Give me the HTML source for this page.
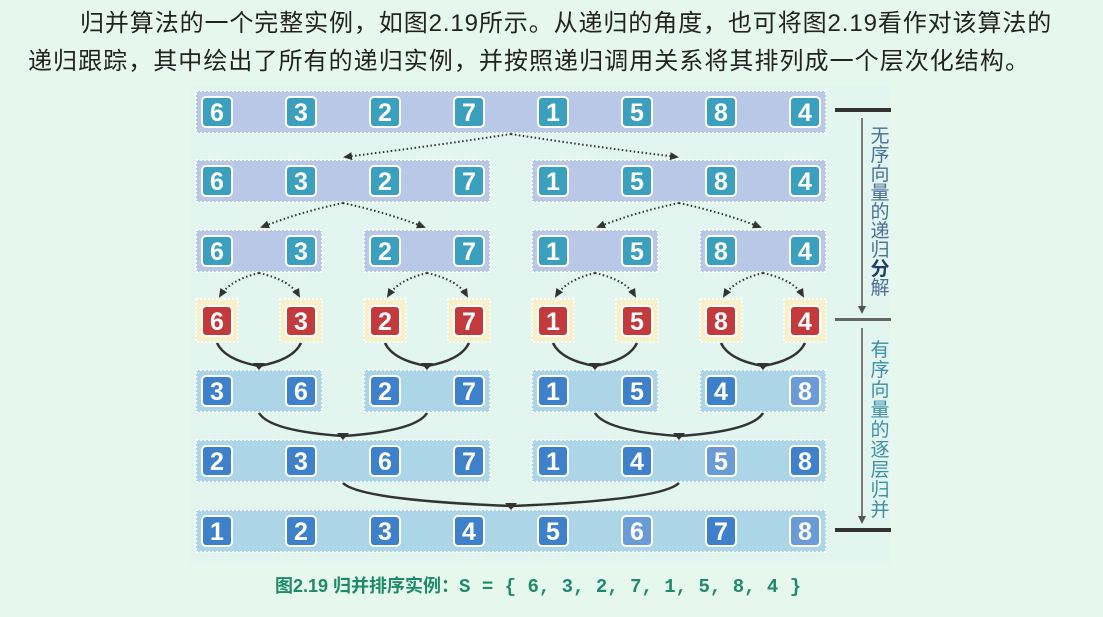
<!DOCTYPE html>
<html><head><meta charset="utf-8"><style>
html,body{margin:0;padding:0;}
body{width:1103px;height:617px;background:#e6f7ee;position:relative;overflow:hidden;font-family:"Liberation Sans","Noto Sans CJK SC",sans-serif;}
.l{position:absolute;white-space:nowrap;font-size:24px;color:#222;line-height:30px;}
</style></head><body>
<div class="l" style="left:80px;top:9px;letter-spacing:0.9px;">归并算法的一个完整实例，如图2.19所示。从递归的角度，也可将图2.19看作对该算法的</div>
<div class="l" style="left:28px;top:47px;letter-spacing:1.05px;">递归跟踪，其中绘出了所有的递归实例，并按照递归调用关系将其排列成一个层次化结构。</div>
<svg width="1103" height="617" style="position:absolute;left:0;top:0" xmlns="http://www.w3.org/2000/svg">
<defs>
<marker id="ah" markerUnits="userSpaceOnUse" markerWidth="9" markerHeight="8" refX="7" refY="4" orient="auto"><path d="M0,0 L9,4 L0,8 z" fill="#333"/></marker>
</defs>
<rect x="190" y="86" width="700" height="478" fill="#e2f5ef"/>
<g stroke="#fff" stroke-width="2" stroke-dasharray="2 2">
<rect x="196" y="91" width="630" height="42" fill="#b9c8e6"/>
<rect x="196" y="160" width="294" height="42" fill="#b9c8e6"/>
<rect x="532" y="160" width="294" height="42" fill="#b9c8e6"/>
<rect x="196" y="230" width="126" height="42" fill="#b9c8e6"/>
<rect x="364" y="230" width="126" height="42" fill="#b9c8e6"/>
<rect x="532" y="230" width="126" height="42" fill="#b9c8e6"/>
<rect x="700" y="230" width="126" height="42" fill="#b9c8e6"/>
<rect x="196" y="299" width="42" height="43" fill="#f7f0c8"/>
<rect x="280" y="299" width="42" height="43" fill="#f7f0c8"/>
<rect x="364" y="299" width="42" height="43" fill="#f7f0c8"/>
<rect x="448" y="299" width="42" height="43" fill="#f7f0c8"/>
<rect x="532" y="299" width="42" height="43" fill="#f7f0c8"/>
<rect x="616" y="299" width="42" height="43" fill="#f7f0c8"/>
<rect x="700" y="299" width="42" height="43" fill="#f7f0c8"/>
<rect x="784" y="299" width="42" height="43" fill="#f7f0c8"/>
<rect x="196" y="370" width="126" height="42" fill="#acd5e8"/>
<rect x="364" y="370" width="126" height="42" fill="#acd5e8"/>
<rect x="532" y="370" width="126" height="42" fill="#acd5e8"/>
<rect x="700" y="370" width="126" height="42" fill="#acd5e8"/>
<rect x="196" y="440" width="294" height="42" fill="#acd5e8"/>
<rect x="532" y="440" width="294" height="42" fill="#acd5e8"/>
<rect x="196" y="510" width="630" height="42" fill="#acd5e8"/>
</g>
<g fill="none" stroke="#333" stroke-width="2" stroke-dasharray="1.5 2.5" marker-end="url(#ah)">
<path d="M511,134 Q440,145 345,157"/><path d="M511,134 Q580,145 677,157"/>
<path d="M343,203 Q300,212 262,227"/><path d="M343,203 Q385,212 424,227"/>
<path d="M679,203 Q636,212 598,227"/><path d="M679,203 Q721,212 760,227"/>
<path d="M259,273 Q230,280 220,296"/><path d="M259,273 Q290,280 299,296"/>
<path d="M427,273 Q398,280 388,296"/><path d="M427,273 Q458,280 467,296"/>
<path d="M595,273 Q566,280 556,296"/><path d="M595,273 Q626,280 635,296"/>
<path d="M763,273 Q734,280 724,296"/><path d="M763,273 Q794,280 803,296"/>
</g>
<g fill="none" stroke="#333" stroke-width="2.5">
<path d="M217,343 Q225,360 259,366 Q293,360 301,343"/>
<path d="M385,343 Q393,360 427,366 Q461,360 469,343"/>
<path d="M553,343 Q561,360 595,366 Q629,360 637,343"/>
<path d="M721,343 Q729,360 763,366 Q797,360 805,343"/>
<path d="M259,413 Q270,431 343,436 Q416,431 427,413"/>
<path d="M595,413 Q606,431 679,436 Q752,431 763,413"/>
<path d="M343,483 Q360,500 511,506 Q662,500 679,483"/>
</g>
<g fill="#333">
<path d="M253,363 L265,363 L259,370 z"/><path d="M421,363 L433,363 L427,370 z"/>
<path d="M589,363 L601,363 L595,370 z"/><path d="M757,363 L769,363 L763,370 z"/>
<path d="M337,433 L349,433 L343,440 z"/><path d="M673,433 L685,433 L679,440 z"/>
<path d="M505,503 L517,503 L511,510 z"/>
</g>
<g font-family="Liberation Sans, sans-serif" font-weight="bold" font-size="25" fill="#fff" text-anchor="middle" stroke="#fff" stroke-width="2">
<g>
<rect x="202" y="97" width="30" height="30" rx="4" fill="#3aa0bd"/><text x="217" y="121" stroke="none">6</text>
<rect x="286" y="97" width="30" height="30" rx="4" fill="#3aa0bd"/><text x="301" y="121" stroke="none">3</text>
<rect x="370" y="97" width="30" height="30" rx="4" fill="#3aa0bd"/><text x="385" y="121" stroke="none">2</text>
<rect x="454" y="97" width="30" height="30" rx="4" fill="#3aa0bd"/><text x="469" y="121" stroke="none">7</text>
<rect x="538" y="97" width="30" height="30" rx="4" fill="#3aa0bd"/><text x="553" y="121" stroke="none">1</text>
<rect x="622" y="97" width="30" height="30" rx="4" fill="#3aa0bd"/><text x="637" y="121" stroke="none">5</text>
<rect x="706" y="97" width="30" height="30" rx="4" fill="#3aa0bd"/><text x="721" y="121" stroke="none">8</text>
<rect x="790" y="97" width="30" height="30" rx="4" fill="#3aa0bd"/><text x="805" y="121" stroke="none">4</text>
</g>
<g>
<rect x="202" y="166" width="30" height="30" rx="4" fill="#3aa0bd"/><text x="217" y="190" stroke="none">6</text>
<rect x="286" y="166" width="30" height="30" rx="4" fill="#3aa0bd"/><text x="301" y="190" stroke="none">3</text>
<rect x="370" y="166" width="30" height="30" rx="4" fill="#3aa0bd"/><text x="385" y="190" stroke="none">2</text>
<rect x="454" y="166" width="30" height="30" rx="4" fill="#3aa0bd"/><text x="469" y="190" stroke="none">7</text>
<rect x="538" y="166" width="30" height="30" rx="4" fill="#3aa0bd"/><text x="553" y="190" stroke="none">1</text>
<rect x="622" y="166" width="30" height="30" rx="4" fill="#3aa0bd"/><text x="637" y="190" stroke="none">5</text>
<rect x="706" y="166" width="30" height="30" rx="4" fill="#3aa0bd"/><text x="721" y="190" stroke="none">8</text>
<rect x="790" y="166" width="30" height="30" rx="4" fill="#3aa0bd"/><text x="805" y="190" stroke="none">4</text>
</g>
<g>
<rect x="202" y="236" width="30" height="30" rx="4" fill="#3aa0bd"/><text x="217" y="260" stroke="none">6</text>
<rect x="286" y="236" width="30" height="30" rx="4" fill="#3aa0bd"/><text x="301" y="260" stroke="none">3</text>
<rect x="370" y="236" width="30" height="30" rx="4" fill="#3aa0bd"/><text x="385" y="260" stroke="none">2</text>
<rect x="454" y="236" width="30" height="30" rx="4" fill="#3aa0bd"/><text x="469" y="260" stroke="none">7</text>
<rect x="538" y="236" width="30" height="30" rx="4" fill="#3aa0bd"/><text x="553" y="260" stroke="none">1</text>
<rect x="622" y="236" width="30" height="30" rx="4" fill="#3aa0bd"/><text x="637" y="260" stroke="none">5</text>
<rect x="706" y="236" width="30" height="30" rx="4" fill="#3aa0bd"/><text x="721" y="260" stroke="none">8</text>
<rect x="790" y="236" width="30" height="30" rx="4" fill="#3aa0bd"/><text x="805" y="260" stroke="none">4</text>
</g>
<g>
<rect x="202" y="306" width="30" height="30" rx="4" fill="#c23a3c"/><text x="217" y="330" stroke="none">6</text>
<rect x="286" y="306" width="30" height="30" rx="4" fill="#c23a3c"/><text x="301" y="330" stroke="none">3</text>
<rect x="370" y="306" width="30" height="30" rx="4" fill="#c23a3c"/><text x="385" y="330" stroke="none">2</text>
<rect x="454" y="306" width="30" height="30" rx="4" fill="#c23a3c"/><text x="469" y="330" stroke="none">7</text>
<rect x="538" y="306" width="30" height="30" rx="4" fill="#c23a3c"/><text x="553" y="330" stroke="none">1</text>
<rect x="622" y="306" width="30" height="30" rx="4" fill="#c23a3c"/><text x="637" y="330" stroke="none">5</text>
<rect x="706" y="306" width="30" height="30" rx="4" fill="#c23a3c"/><text x="721" y="330" stroke="none">8</text>
<rect x="790" y="306" width="30" height="30" rx="4" fill="#c23a3c"/><text x="805" y="330" stroke="none">4</text>
</g>
<g>
<rect x="202" y="376" width="30" height="30" rx="4" fill="#3e80ca"/><text x="217" y="400" stroke="none">3</text>
<rect x="286" y="376" width="30" height="30" rx="4" fill="#3e80ca"/><text x="301" y="400" stroke="none">6</text>
<rect x="370" y="376" width="30" height="30" rx="4" fill="#3e80ca"/><text x="385" y="400" stroke="none">2</text>
<rect x="454" y="376" width="30" height="30" rx="4" fill="#3e80ca"/><text x="469" y="400" stroke="none">7</text>
<rect x="538" y="376" width="30" height="30" rx="4" fill="#3e80ca"/><text x="553" y="400" stroke="none">1</text>
<rect x="622" y="376" width="30" height="30" rx="4" fill="#3e80ca"/><text x="637" y="400" stroke="none">5</text>
<rect x="706" y="376" width="30" height="30" rx="4" fill="#3e80ca"/><text x="721" y="400" stroke="none">4</text>
<rect x="790" y="376" width="30" height="30" rx="4" fill="#6b9bd6"/><text x="805" y="400" stroke="none">8</text>
</g>
<g>
<rect x="202" y="446" width="30" height="30" rx="4" fill="#3e80ca"/><text x="217" y="470" stroke="none">2</text>
<rect x="286" y="446" width="30" height="30" rx="4" fill="#3e80ca"/><text x="301" y="470" stroke="none">3</text>
<rect x="370" y="446" width="30" height="30" rx="4" fill="#3e80ca"/><text x="385" y="470" stroke="none">6</text>
<rect x="454" y="446" width="30" height="30" rx="4" fill="#3e80ca"/><text x="469" y="470" stroke="none">7</text>
<rect x="538" y="446" width="30" height="30" rx="4" fill="#3e80ca"/><text x="553" y="470" stroke="none">1</text>
<rect x="622" y="446" width="30" height="30" rx="4" fill="#3e80ca"/><text x="637" y="470" stroke="none">4</text>
<rect x="706" y="446" width="30" height="30" rx="4" fill="#6b9bd6"/><text x="721" y="470" stroke="none">5</text>
<rect x="790" y="446" width="30" height="30" rx="4" fill="#3e80ca"/><text x="805" y="470" stroke="none">8</text>
</g>
<g>
<rect x="202" y="516" width="30" height="30" rx="4" fill="#3e80ca"/><text x="217" y="540" stroke="none">1</text>
<rect x="286" y="516" width="30" height="30" rx="4" fill="#3e80ca"/><text x="301" y="540" stroke="none">2</text>
<rect x="370" y="516" width="30" height="30" rx="4" fill="#3e80ca"/><text x="385" y="540" stroke="none">3</text>
<rect x="454" y="516" width="30" height="30" rx="4" fill="#3e80ca"/><text x="469" y="540" stroke="none">4</text>
<rect x="538" y="516" width="30" height="30" rx="4" fill="#3e80ca"/><text x="553" y="540" stroke="none">5</text>
<rect x="622" y="516" width="30" height="30" rx="4" fill="#6b9bd6"/><text x="637" y="540" stroke="none">6</text>
<rect x="706" y="516" width="30" height="30" rx="4" fill="#3e80ca"/><text x="721" y="540" stroke="none">7</text>
<rect x="790" y="516" width="30" height="30" rx="4" fill="#6b9bd6"/><text x="805" y="540" stroke="none">8</text>
</g>
</g>
<rect x="835" y="108" width="56" height="4" fill="#333"/>
<rect x="835" y="318" width="56" height="3" fill="#666"/>
<rect x="835" y="528" width="56" height="4" fill="#333"/>
<g stroke="#555" stroke-width="1.5"><line x1="862" y1="118" x2="862" y2="308"/><line x1="862" y1="328" x2="862" y2="518"/></g>
<path d="M858,306 L866,306 L862,314 z M858,516 L866,516 L862,524 z" fill="#555"/>
<g font-family="Liberation Sans, Noto Sans CJK SC, sans-serif" font-size="19" text-anchor="middle" fill="#4a6f96">
<text x="880" y="142">无</text><text x="880" y="161">序</text><text x="880" y="180">向</text><text x="880" y="199">量</text><text x="880" y="218">的</text><text x="880" y="237">递</text><text x="880" y="256">归</text><text x="880" y="275" fill="#1f3f6a" font-weight="bold">分</text><text x="880" y="294">解</text>
</g>
<g font-family="Liberation Sans, Noto Sans CJK SC, sans-serif" font-size="19" text-anchor="middle" fill="#3c8fa6">
<text x="880" y="356">有</text><text x="880" y="376">序</text><text x="880" y="396">向</text><text x="880" y="416">量</text><text x="880" y="436">的</text><text x="880" y="456">逐</text><text x="880" y="476">层</text><text x="880" y="496">归</text><text x="880" y="516">并</text>
</g>
<text x="275" y="592" font-family="Liberation Sans, Noto Sans CJK SC, sans-serif" font-size="18" font-weight="bold" fill="#1f8a6a">图2.19 归并排序实例：<tspan font-family="Liberation Mono, monospace" font-size="19">S = { 6, 3, 2, 7, 1, 5, 8, 4 }</tspan></text>
</svg>
</body></html>
